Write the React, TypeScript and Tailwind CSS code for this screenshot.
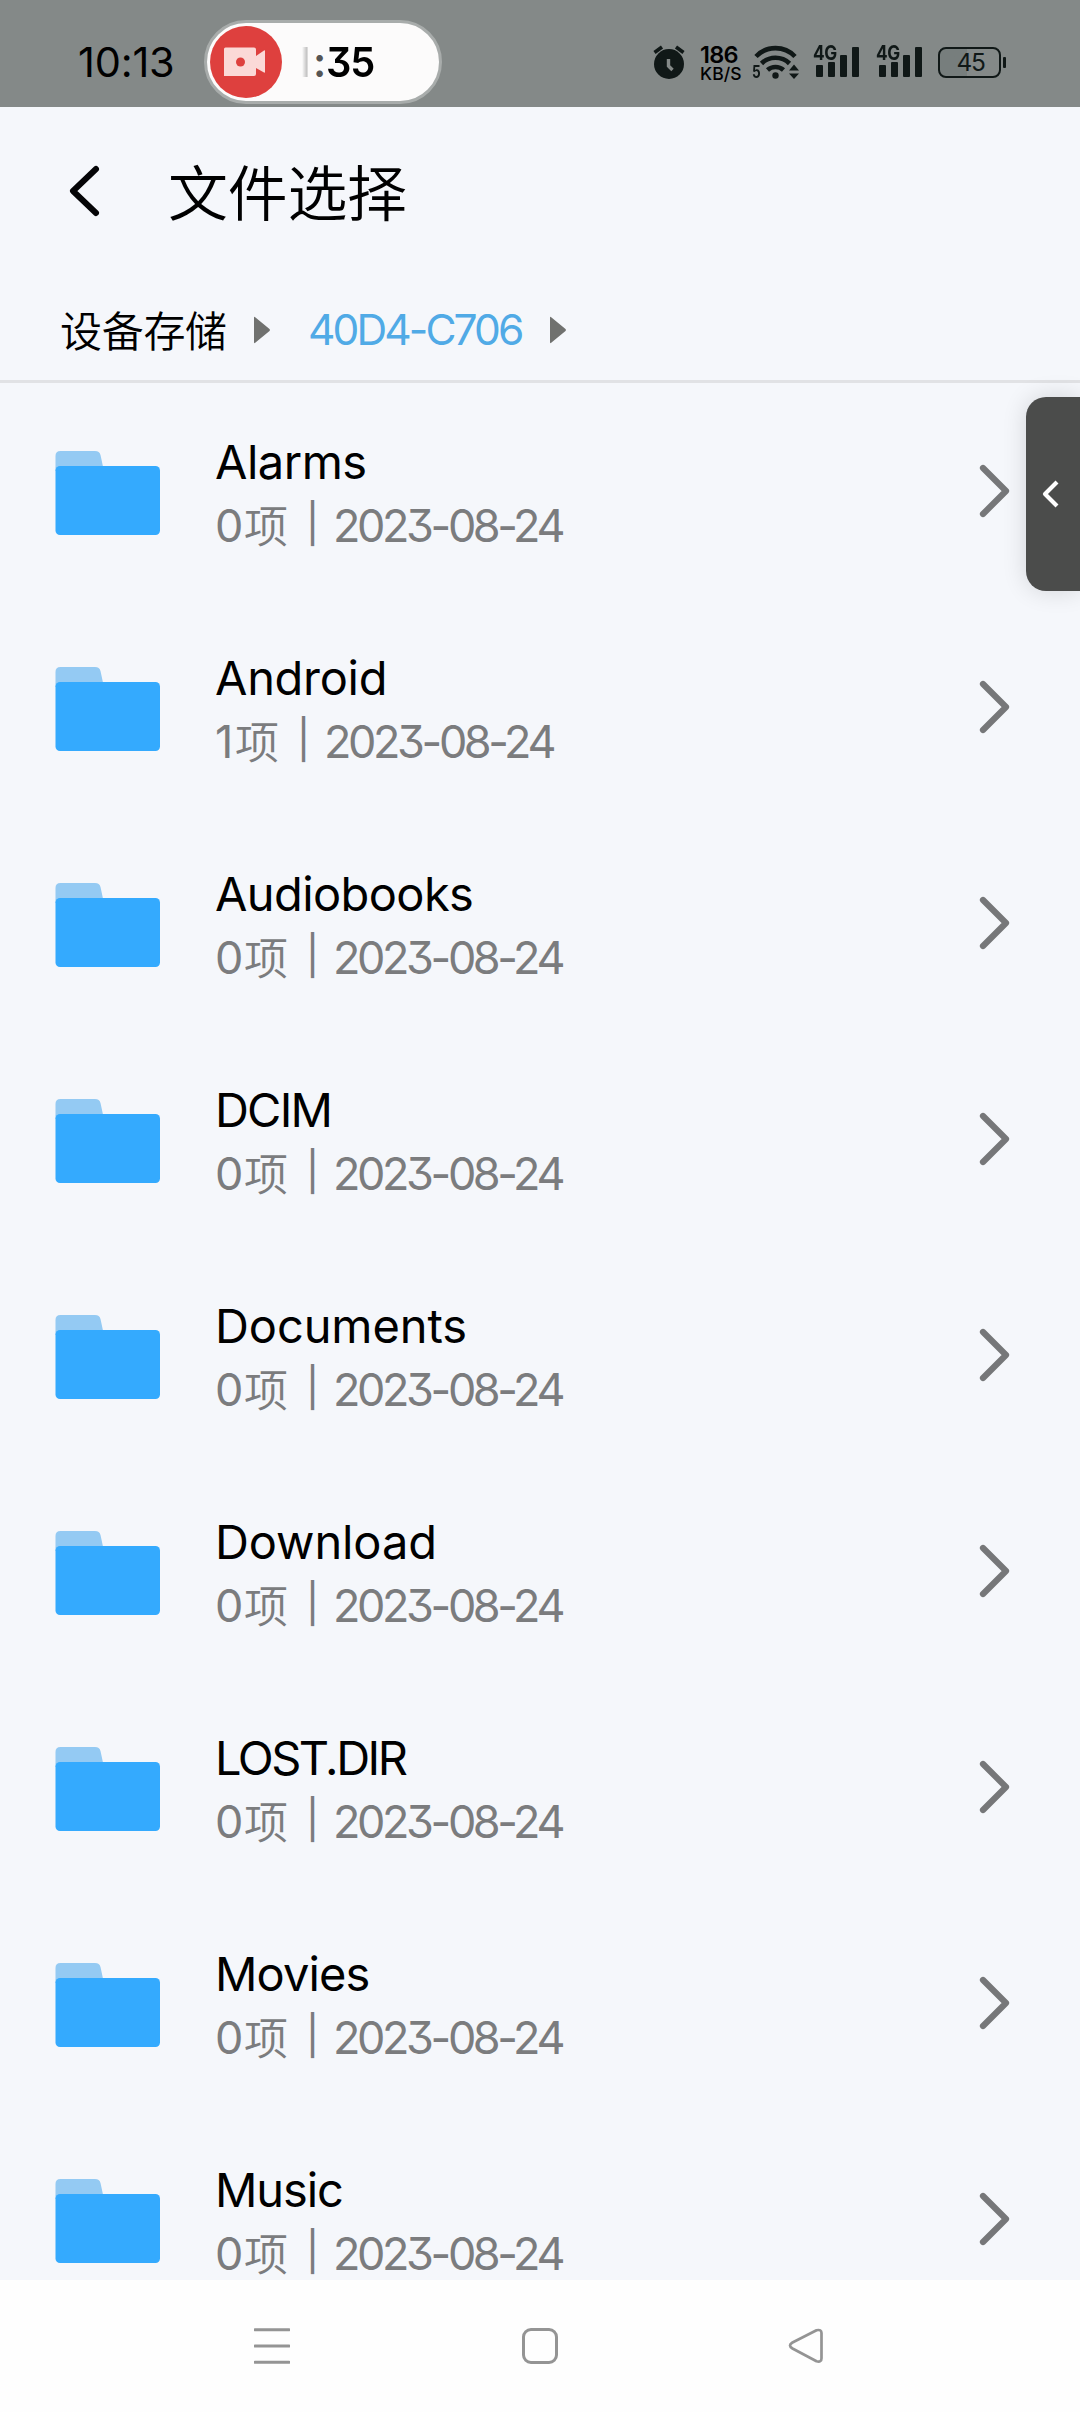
type Folder = { name: string; count: string; date: string; tracking: string };

const folders: Folder[] = [
  { name: 'Alarms', count: '0', date: '2023-08-24', tracking: 'tracking-[-0.5px]' },
  { name: 'Android', count: '1', date: '2023-08-24', tracking: 'tracking-[-0.3px]' },
  { name: 'Audiobooks', count: '0', date: '2023-08-24', tracking: 'tracking-[-0.6px]' },
  { name: 'DCIM', count: '0', date: '2023-08-24', tracking: 'tracking-[-1.8px]' },
  { name: 'Documents', count: '0', date: '2023-08-24', tracking: 'tracking-[-0.1px]' },
  { name: 'Download', count: '0', date: '2023-08-24', tracking: 'tracking-[-0.1px]' },
  { name: 'LOST.DIR', count: '0', date: '2023-08-24', tracking: 'tracking-[-2.5px]' },
  { name: 'Movies', count: '0', date: '2023-08-24', tracking: 'tracking-[-0.9px]' },
  { name: 'Music', count: '0', date: '2023-08-24', tracking: 'tracking-[-1.1px]' },
];

function AlarmIcon() {
  return (
    <svg className="ml-[211px] h-[36px] w-[34px] shrink-0" viewBox="0 0 34 36" fill="none">
      <circle cx="17" cy="20" r="15" fill="#101817" />
      <path d="M2.5 8.5 10 3M24 3l7.5 5.5" stroke="#101817" strokeWidth="3.6" />
      <path d="M16.5 15v7l4 4" stroke="#848988" strokeWidth="3.4" />
    </svg>
  );
}

function WifiIcon() {
  return (
    <svg className="h-[36px] w-[48px]" viewBox="0 0 48 36" fill="none">
      <path d="M4 12.5a27 27 0 0 1 39 0" stroke="#101817" strokeWidth="4.6" />
      <path d="M9.5 19.5a20 20 0 0 1 28 0" stroke="#101817" strokeWidth="4.6" />
      <path d="M15.5 26a12 12 0 0 1 16 0" stroke="#101817" strokeWidth="4.6" />
      <circle cx="23.5" cy="31.5" r="3.2" fill="#101817" />
      <path d="M42 20.500l5 6H37zM42 35l5-5.500H37z" fill="#101817" />
    </svg>
  );
}

function Signal() {
  return (
    <div className="relative h-[33px] w-[47px] shrink-0">
      <span className="absolute left-0 top-0 w-[24px] origin-left scale-x-[.84] text-[20.5px] font-bold leading-[17px] tracking-[-0.5px] text-[#101817]">4G</span>
      <div className="flex h-full items-end gap-[5.5px] pl-[3px]">
        <i className="h-[12px] w-[6.500px] rounded-[1px] bg-[#101817]" />
        <i className="h-[15px] w-[6.500px] rounded-[1px] bg-[#101817]" />
        <i className="h-[22px] w-[6.500px] rounded-[1px] bg-[#101817]" />
        <i className="h-[30px] w-[6.500px] rounded-[1px] bg-[#101817]" />
      </div>
    </div>
  );
}

function StatusBar() {
  return (
    <header className="relative flex h-[107px] shrink-0 items-start bg-[#848988] text-black">
      <time className="ml-[78px] mt-[42px] w-[126px] text-[41.5px] leading-[40px] tracking-[-0.2px]">10:13</time>
      <div className="mt-[20px] flex h-[84px] w-[238px] shrink-0 items-center rounded-full border-[3px] border-[#a8acab] bg-[#fcfbfb] pl-[3px]">
        <svg className="size-[72px] shrink-0" viewBox="0 0 72 72">
          <circle cx="36" cy="36" r="36" fill="#de403e" />
          <path d="M14 23q0-1.500 1.500-1.500H44q2 0 2 2V30l8-5.500q1-.5 1 .5v21q0 1-1 .5L46 42v6q0 2-2 2H14z" fill="#fbd9d7" />
          <circle cx="30.500" cy="36" r="4.500" fill="#de403e" />
        </svg>
        <div className="ml-[11px] flex text-[41.5px] font-semibold leading-[40px]">
          <span className="w-[20px] bg-gradient-to-r from-transparent from-45% to-[#a8a8a8] to-80% bg-clip-text text-transparent">1</span>
          <span className="w-[13px] text-[#555]">:</span>
          <span className="origin-left scale-x-[.96] tracking-[-1.3px] [font-feature-settings:'cv09']">35</span>
        </div>
      </div>
      <div className="ml-[-1px] flex pt-[44px]">
        <AlarmIcon />
        <div className="ml-[14px] w-[52px] font-medium">
          <p className="pt-[2px] text-[23.5px] font-semibold leading-[18px] tracking-[-0.8px]">186</p>
          <p className="mt-[1px] text-[17.5px] leading-[18px] tracking-[0.1px]">KB/S</p>
        </div>
        <div className="relative ml-0">
          <WifiIcon />
          <span className="absolute left-0 top-[20px] origin-left scale-x-[.8] text-[17px] font-bold leading-[16px] text-[#101817]">5</span>
        </div>
      </div>
      <div className="ml-[13px] flex items-start gap-[16px] pt-[44px]">
        <Signal />
        <Signal />
      </div>
      <div className="ml-[15px] mt-[47px] flex items-center">
        <div className="flex h-[31px] w-[63px] items-center justify-center rounded-[8px] border-[2.5px] border-[#101817] bg-gradient-to-r from-[#777e7d] from-45% to-[#848988] to-45% pl-[2px] text-[24.5px] leading-none tracking-[-1.4px] text-[#101817]">45</div>
        <i className="ml-[2px] h-[11px] w-[2.500px] rounded-[1px] bg-[#101817]" />
      </div>
    </header>
  );
}

function Crumb() {
  return (
    <svg className="h-[28px] w-[18px]" viewBox="0 0 18 28">
      <path d="M1 2q0-2 1.500-.5L16.500 13q1 1 0 2L2.500 26.500Q1 28 1 26z" fill="#70716f" />
    </svg>
  );
}

function FolderIcon() {
  return (
    <svg className="h-[85px] w-[106px] shrink-0" viewBox="0 0 106 85">
      <path d="M0.500 20V5q0-5 5-5H40q4.500 0 5.500 4l3 14z" fill="#94caf3" />
      <rect x="0.500" y="15" width="104.500" height="69" rx="4.500" fill="#34aafe" />
    </svg>
  );
}

function Row({ folder }: { folder: Folder }) {
  return (
    <li className="flex h-[216px] shrink-0 items-start">
      <div className="ml-[55px] mt-[68px] w-[160px]">
        <FolderIcon />
      </div>
      <div className="flex-1 pt-[49px]">
        <p className={`text-[47px] font-normal leading-[60px] text-black ${folder.tracking}`}>{folder.name}</p>
        <div className="mt-[4px] flex text-[45px] font-normal leading-[60px] text-[#7b7c7e]">
          <span className={folder.count === '1' ? 'w-[20px]' : 'w-[29px]'}>{folder.count}</span>
          <span className="mt-[-2px] w-[61px] font-['Noto_Sans_CJK_SC',sans-serif] text-[44px] font-[350]">项</span>
          <span className="mr-[13px] mt-[-9px] w-[15px] text-center font-['Noto_Sans_CJK_SC',sans-serif] text-[41px] font-medium">|</span>
          <span className="tracking-[-3.4px] [font-feature-settings:'cv09']">{folder.date}</span>
        </div>
      </div>
      <svg className="mr-[68px] mt-[78px] h-[60px] w-[36px]" viewBox="0 0 36 60" fill="none">
        <path d="M7 7l23 23L7 53" stroke="#767779" strokeWidth="6.200" strokeLinecap="round" strokeLinejoin="round" />
      </svg>
    </li>
  );
}

export default function App() {
  return (
    <div className="relative flex h-[2412px] w-[1080px] flex-col overflow-hidden bg-[#f5f7fb] font-['Inter','Noto_Sans_CJK_SC',sans-serif]">
      <StatusBar />
      <div className="flex h-[173px] shrink-0 items-center">
        <svg className="ml-[65px] mt-[-5px] h-[56px] w-[40px]" viewBox="0 0 40 56" fill="none">
          <path d="M31 6L8 28l23 22" stroke="#050507" strokeWidth="6" strokeLinecap="round" strokeLinejoin="round" />
        </svg>
        <h1 className="ml-[63px] mt-[-8px] font-['Noto_Sans_CJK_SC',sans-serif] text-[60px] font-[350] leading-[80px] tracking-[-0.3px] text-black">文件选择</h1>
      </div>
      <nav className="flex h-[103px] shrink-0 items-center border-b-[3px] border-[#e1e2e5] pb-0">
        <span className="ml-[60px] mt-[-3px] w-[193px] font-['Noto_Sans_CJK_SC',sans-serif] text-[42px] font-[350] leading-[60px] tracking-[-0.3px] text-black">设备存储</span>
        <Crumb />
        <span className="ml-[37px] w-[241px] text-[42.5px] font-normal leading-[60px] tracking-[-2.9px] text-[#50aae6]">40D4-C706</span>
        <Crumb />
      </nav>
      <ul className="flex min-h-0 flex-1 flex-col overflow-hidden">
        {folders.map((f) => (
          <Row key={f.name} folder={f} />
        ))}
      </ul>
      <footer className="flex h-[132px] shrink-0 items-center bg-[#fefefe]">
        <svg className="ml-[254px] h-[38px] w-[36px]" viewBox="0 0 36 38">
          <path d="M1 2.700h34M1 19h34M1 35.300h34" stroke="#949494" strokeWidth="3" strokeLinecap="round" />
        </svg>
        <i className="ml-[232px] size-[36px] rounded-[9px] border-[3px] border-[#949494]" />
        <svg className="ml-[230px] h-[38px] w-[36px]" viewBox="0 0 36 38" fill="none">
          <path d="M28.500 3.300L4.500 15.500q-5 3 0 6L28.500 34.200q5 1.500 5-3V6q0-4-5-2.700z" stroke="#949494" strokeWidth="2.700" strokeLinejoin="round" />
        </svg>
      </footer>
      <button className="absolute right-0 top-[397px] flex h-[194px] w-[54px] items-center rounded-l-[20px] bg-[#4b4c4b] pl-[13px] shadow-[0_0_24px_rgba(0,0,0,.14)]">
        <svg className="h-[32px] w-[24px]" viewBox="0 0 24 32" fill="none">
          <path d="M18 4L6 16l12 12" stroke="#fff" strokeWidth="4.200" strokeLinejoin="round" />
        </svg>
      </button>
    </div>
  );
}
